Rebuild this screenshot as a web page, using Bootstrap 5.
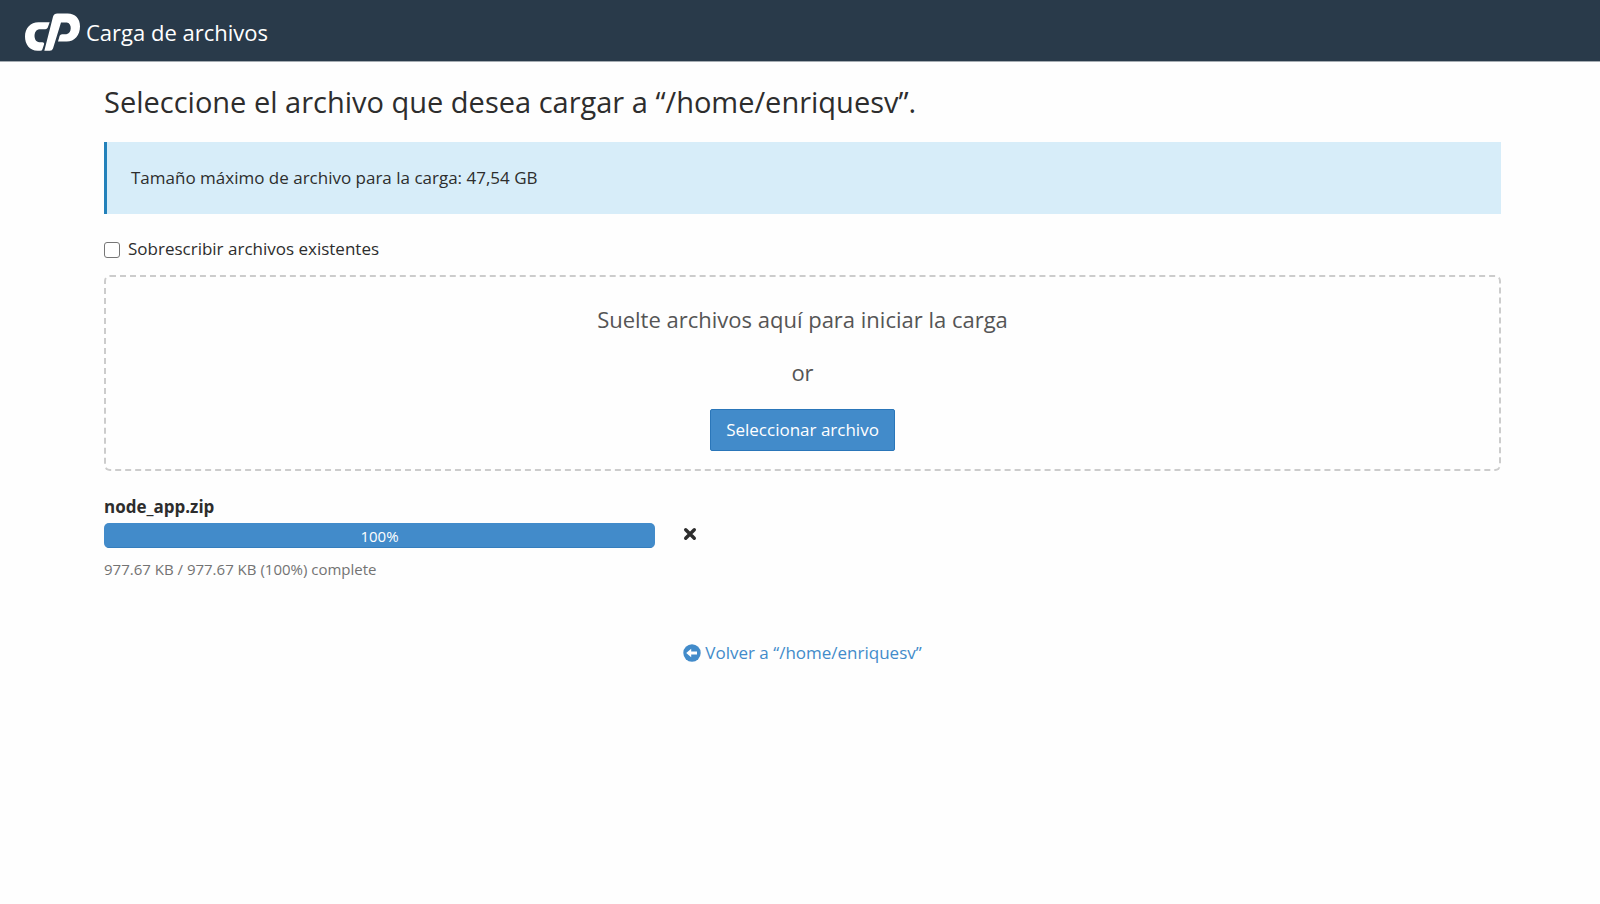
<!DOCTYPE html>
<html lang="es">
<head>
<meta charset="utf-8">
<meta name="viewport" content="width=device-width, initial-scale=1">
<title>Carga de archivos</title>
<link href="https://cdn.jsdelivr.net/npm/bootstrap@5.3.0/dist/css/bootstrap.min.css" rel="stylesheet">
<style>
  body { font-family: "Open Sans", "Noto Sans", sans-serif; font-size: 17px; line-height: 24px; color: #2d2d2d; background: #fefefe; }
  .top-bar { background: #293a4a; height: 62px; padding: 2px 25px 0; border-bottom: 1px solid #a5acb2; }
  .top-bar .navbar-brand { font-size: 22px; line-height: 32px; gap: 6px; color: #fff; }
  .page { padding: 22px 99px 24px 104px; }
  .page h1 { font-size: 29px; line-height: 36px; margin-bottom: 22px; }
  .notice { background: #d7edf9; border: 0; border-left: 3px solid #2381ba; border-radius: 0; color: #2d2d2d; padding: 24px; margin-bottom: 23px; }
  .overwrite { gap: 8px; margin-bottom: 14px; }
  .overwrite .form-check-input { width: 16px; height: 16px; margin: 2px 0 0; border: 1px solid #767676; border-radius: 3px; }
  .drop-zone { border: 2px dashed #ccc; border-radius: 6px; padding: 26px 24px 18px; color: #555; font-size: 22px; line-height: 32px; }
  .drop-zone p { margin-bottom: 21px; }
  .drop-zone .btn { --bs-btn-bg: #428bca; --bs-btn-border-color: #2a76b9; --bs-btn-hover-bg: #3276b1; font-size: 17px; line-height: 24px; padding: 8px 15px; border-radius: 2px; }
  .upload { padding-top: 24px; }
  .upload-bar { width: 551px; height: 25px; margin-top: 4px; font-size: 15px; border-radius: 5px; }
  .upload-bar .progress-bar { background: #428bca; box-shadow: inset 0 -1px 0 #357ebd; }
  .upload-status { font-size: 15px; color: #737373; margin-top: 9px; }
  .back-link { color: #428bca; gap: 4px; margin-top: 60px; }
</style>
</head>
<body>
<nav class="navbar top-bar">
  <span class="navbar-brand d-flex align-items-center m-0 p-0">
    <svg width="55" height="38" viewBox="0 0 165 113" fill="#fff" role="img" aria-label="cPanel">
      <path d="M74 27 68 44Q66 48 61 48H43C24 49 24 86 43 87H52Q59 88 57 94L52 109Q51 113 46 113H38C13 112 0 93 0 70 0 44 17 27 40 27Z"/>
      <path d="M58 113 84 11Q87 1 97 1H128C151 1 165 17 165 39 165 66 149 85 125 85H99L104 68Q106 63 111 63H124C141 62 142 29 125 28H108L84 106Q82 113 74 113Z"/>
    </svg>
    Carga de archivos
  </span>
</nav>
<main class="page">
  <h1 class="fw-normal">Seleccione el archivo que desea cargar a “/home/enriquesv”.</h1>
  <div class="alert notice">Tamaño máximo de archivo para la carga: 47,54 GB</div>
  <div class="overwrite d-flex align-items-center">
    <input class="form-check-input" type="checkbox" id="overwrite">
    <label for="overwrite">Sobrescribir archivos existentes</label>
  </div>
  <section class="drop-zone text-center">
    <p>Suelte archivos aquí para iniciar la carga</p>
    <p>or</p>
    <button type="button" class="btn btn-primary d-block mx-auto">Seleccionar archivo</button>
  </section>
  <section class="upload">
    <div class="fw-bold">node_app.zip</div>
    <div class="d-flex align-items-center gap-4">
      <div class="progress upload-bar" role="progressbar" aria-label="node_app.zip" aria-valuenow="100" aria-valuemin="0" aria-valuemax="100">
        <div class="progress-bar" style="width: 100%">100%</div>
      </div>
      <button type="button" class="btn border-0 p-1 d-flex" aria-label="Quitar">
        <svg width="14" height="14" viewBox="0 0 14 14" fill="none" stroke="#2d2d2d" stroke-width="3.4" stroke-linecap="round"><path d="M2.7 2.7l8.6 8.6M11.3 2.7l-8.6 8.6"/></svg>
      </button>
    </div>
    <div class="upload-status">977.67 KB / 977.67 KB (100%) complete</div>
  </section>
  <div class="d-flex justify-content-center">
    <a href="#" class="back-link d-flex align-items-center text-decoration-none">
      <svg width="18" height="18" viewBox="0 0 18 18" aria-hidden="true"><circle cx="9" cy="9" r="8.7" fill="#428bca"/><path d="M3.2 9 8.2 4.8V7.4H14V10.6H8.2V13.2Z" fill="#fff"/></svg>
      Volver a “/home/enriquesv”
    </a>
  </div>
</main>
<script src="https://cdn.jsdelivr.net/npm/bootstrap@5.3.0/dist/js/bootstrap.bundle.min.js"></script>
</body>
</html>
